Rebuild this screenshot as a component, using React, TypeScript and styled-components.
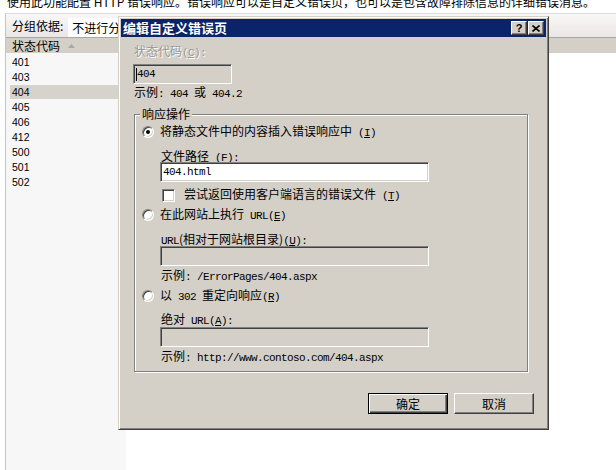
import styled, { createGlobalStyle } from "styled-components";

const codes = ["401", "403", "404", "405", "406", "412", "500", "501", "502"];

const GlobalStyle = createGlobalStyle`
  html, body {
    margin: 0;
    padding: 0;
    background: #fff;
  }
  body {
    font-family: "Noto Sans CJK SC", "Liberation Sans", sans-serif;
    font-size: 12px;
    color: #000;
  }
  #root {
    width: 616px;
    height: 470px;
    overflow: hidden;
  }
`;

const Page = styled.div`
  position: relative;
  width: 616px;
  height: 470px;
  overflow: hidden;
  display: flex;
  flex-direction: column;
`;

const Intro = styled.div`
  margin-top: -5px;
  padding-left: 7px;
  height: 13px;
  line-height: 13px;
  white-space: nowrap;
`;

const Panel = styled.div`
  flex: 1;
  margin: 5px 0 0 5px;
  border-left: 1px solid #c4c4c4;
  border-top: 1px solid #dcdcdc;
  display: flex;
  flex-direction: column;
`;

const Toolbar = styled.div`
  height: 23px;
  display: flex;
  align-items: stretch;
  padding-left: 6px;
  background: linear-gradient(to bottom, #f9f7f7, #ebe6e6);
  border-bottom: 1px solid #a8a8a8;
`;

const ToolLabel = styled.span`
  display: flex;
  align-items: center;
  line-height: 14px;
`;

const Combo = styled.div`
  margin: 4px 0 0 5px;
  padding-left: 4px;
  width: 60px;
  overflow: hidden;
  background: #fff;
  display: flex;
  align-items: center;
  white-space: nowrap;
`;

const Header = styled.div`
  height: 15px;
  background: #d4d0c8;
  display: flex;
  align-items: center;
  padding-left: 6px;
  line-height: 15px;
`;

const SortArrow = styled.svg`
  margin-left: 8px;
`;

const ListArea = styled.div`
  flex: 1;
  display: flex;
`;

const CodeColumn = styled.div`
  width: 116px;
  padding: 1px 0 0 4px;
  background: #f7f7f7;
`;

const CodeRow = styled.div<{ $selected?: boolean }>`
  height: 14px;
  margin: 1px 0;
  padding-left: 2px;
  line-height: 14px;
  font-family: "Liberation Sans", sans-serif;
  font-size: 10.5px;
  background: ${(p) => (p.$selected ? "#d6d3cd" : "transparent")};
`;

const Dialog = styled.div`
  position: absolute;
  left: 118px;
  top: 16px;
  width: 431px;
  height: 414px;
  box-sizing: border-box;
  background: #d4d0c8;
  border: 1px solid;
  border-color: #d4d0c8 #404040 #404040 #d4d0c8;
  box-shadow: inset 1px 1px 0 #fff, inset -1px -1px 0 #808080;
  padding: 2px;
  display: flex;
  flex-direction: column;
`;

const TitleBar = styled.div`
  height: 18px;
  flex-shrink: 0;
  background: #0a246a;
  display: flex;
  align-items: center;
  padding: 0 2px;
`;

const Title = styled.span`
  color: #fff;
  font-weight: bold;
  font-size: 13px;
  line-height: 16px;
`;

const CaptionButtons = styled.div`
  margin-left: auto;
  display: flex;
  gap: 1px;
`;

const CaptionButton = styled.div`
  width: 16px;
  height: 14px;
  box-sizing: border-box;
  background: #d4d0c8;
  border: 1px solid;
  border-color: #fff #404040 #404040 #fff;
  box-shadow: inset -1px -1px 0 #808080;
  display: flex;
  align-items: center;
  justify-content: center;
  font-family: "Liberation Sans", sans-serif;
  font-weight: bold;
  font-size: 11px;
  line-height: 12px;
`;

const Body = styled.div`
  flex: 1;
  padding: 7px 12px 0 12px;
  display: flex;
  flex-direction: column;
`;

const Label = styled.div<{ $mt?: number; $disabled?: boolean }>`
  height: 13px;
  line-height: 13px;
  margin-top: ${(p) => p.$mt ?? 0}px;
  padding-left: 1px;
  white-space: nowrap;
  color: ${(p) => (p.$disabled ? "#979797" : "#000")};
  text-shadow: ${(p) => (p.$disabled ? "1px 1px 0 #fff" : "none")};
`;

const Hint = styled.div<{ $mt?: number }>`
  height: 14px;
  line-height: 14px;
  margin-top: ${(p) => p.$mt ?? 0}px;
  padding-left: 1px;
  white-space: pre;
`;

const Mono = styled.span`
  font-family: "Liberation Mono", monospace;
  font-size: 11px;
  letter-spacing: -0.6px;
  white-space: pre;
`;

const TextBox = styled.div<{ $width: number; $mt?: number; $disabled?: boolean }>`
  width: ${(p) => p.$width}px;
  height: 20px;
  margin-top: ${(p) => p.$mt ?? 0}px;
  box-sizing: border-box;
  border: 1px solid;
  border-color: #808080 #fff #fff #808080;
  box-shadow: inset 1px 1px 0 #404040, inset -1px -1px 0 #d4d0c8;
  background: ${(p) => (p.$disabled ? "#d4d0c8" : "#fff")};
  padding-left: 2px;
  display: flex;
  align-items: center;
`;

const Caret = styled.span`
  width: 1px;
  height: 13px;
  background: #000;
`;

const GroupBox = styled.div`
  position: relative;
  margin: 15px 6px 0 1px;
  border: 1px solid #808080;
  box-shadow: 1px 1px 0 #fff, inset 1px 1px 0 #fff;
  padding: 10px 0 8px 7px;
  display: flex;
  flex-direction: column;
`;

const GroupTitle = styled.span`
  position: absolute;
  top: -8px;
  left: 5px;
  padding: 0 2px;
  line-height: 14px;
  background: #d4d0c8;
`;

const OptionRow = styled.div<{ $mt?: number }>`
  height: 14px;
  margin-top: ${(p) => p.$mt ?? 0}px;
  display: flex;
  align-items: center;
`;

const RowText = styled.span`
  line-height: 14px;
  white-space: pre;
`;

const Radio = styled.span<{ $checked?: boolean }>`
  position: relative;
  flex-shrink: 0;
  width: 12px;
  height: 12px;
  margin-right: 6px;
  box-sizing: border-box;
  border-radius: 50%;
  background: #fff;
  border: 1px solid;
  border-color: #808080 #fff #fff #808080;
  box-shadow: inset 1px 1px 0 #404040, inset -1px -1px 0 #d4d0c8;
  &::after {
    content: "";
    display: ${(p) => (p.$checked ? "block" : "none")};
    position: absolute;
    left: 3px;
    top: 3px;
    width: 4px;
    height: 4px;
    border-radius: 50%;
    background: #000;
  }
`;

const Indent = styled.div`
  margin-left: 18px;
  display: flex;
  flex-direction: column;
`;

const CheckRow = styled.div<{ $mt?: number }>`
  height: 14px;
  margin-top: ${(p) => p.$mt ?? 0}px;
  padding-left: 2px;
  display: flex;
  align-items: center;
`;

const CheckBox = styled.span`
  flex-shrink: 0;
  width: 13px;
  height: 13px;
  margin-right: 3px;
  box-sizing: border-box;
  background: #fff;
  border: 1px solid;
  border-color: #808080 #fff #fff #808080;
  box-shadow: inset 1px 1px 0 #404040, inset -1px -1px 0 #d4d0c8;
`;

const ButtonRow = styled.div`
  margin-top: 21px;
  display: flex;
  justify-content: flex-end;
  gap: 6px;
`;

const Button = styled.div<{ $default?: boolean }>`
  width: 80px;
  height: 21px;
  box-sizing: border-box;
  background: #d4d0c8;
  display: flex;
  align-items: center;
  justify-content: center;
  line-height: 14px;
  border: 1px solid;
  border-color: ${(p) => (p.$default ? "#000" : "#fff #404040 #404040 #fff")};
  box-shadow: ${(p) =>
    p.$default
      ? "inset 1px 1px 0 #fff, inset -1px -1px 0 #404040, inset -2px -2px 0 #808080"
      : "inset -1px -1px 0 #808080"};
`;

const Key = ({ k }: { k: string }) => (
  <Mono>
    (<u>{k}</u>)
  </Mono>
);

export default function App() {
  return (
    <>
      <GlobalStyle />
      <Page>
        <Intro>
          使用此功能配置 HTTP 错误响应。错误响应可以是自定义错误页，也可以是包含故障排除信息的详细错误消息。
        </Intro>
        <Panel>
          <Toolbar>
            <ToolLabel>分组依据:</ToolLabel>
            <Combo>不进行分组</Combo>
          </Toolbar>
          <Header>
            状态代码
            <SortArrow width="7" height="4" viewBox="0 0 7 4">
              <path d="M3.5 0 L7 4 L0 4 Z" fill="#a7a7a7" />
            </SortArrow>
          </Header>
          <ListArea>
            <CodeColumn>
              {codes.map((c) => (
                <CodeRow key={c} $selected={c === "404"}>
                  {c}
                </CodeRow>
              ))}
            </CodeColumn>
          </ListArea>
        </Panel>

        <Dialog>
          <TitleBar>
            <Title>编辑自定义错误页</Title>
            <CaptionButtons>
              <CaptionButton>?</CaptionButton>
              <CaptionButton>
                <svg width="8" height="7" viewBox="0 0 8 7">
                  <path d="M0.5 0.5 L7.5 6.5 M7.5 0.5 L0.5 6.5" stroke="#000" strokeWidth="1.6" />
                </svg>
              </CaptionButton>
            </CaptionButtons>
          </TitleBar>
          <Body>
            <Label $disabled>
              状态代码<Key k="C" />
              <Mono>:</Mono>
            </Label>
            <TextBox $width={99} $mt={7} $disabled>
              <Caret />
              <Mono>404</Mono>
            </TextBox>
            <Hint $mt={1}>
              示例<Mono>: 404 </Mono>或<Mono> 404.2</Mono>
            </Hint>

            <GroupBox>
              <GroupTitle>响应操作</GroupTitle>
              <OptionRow>
                <Radio $checked />
                <RowText>
                  将静态文件中的内容插入错误响应中<Mono> </Mono>
                  <Key k="I" />
                </RowText>
              </OptionRow>
              <Indent>
                <Label $mt={10}>
                  文件路径<Mono> </Mono>
                  <Key k="F" />
                  <Mono>:</Mono>
                </Label>
                <TextBox $width={269}>
                  <Mono>404.html</Mono>
                </TextBox>
                <CheckRow $mt={6}>
                  <CheckBox />
                  <RowText>
                    <Mono> </Mono>尝试返回使用客户端语言的错误文件<Mono> </Mono>
                    <Key k="T" />
                  </RowText>
                </CheckRow>
              </Indent>

              <OptionRow $mt={6}>
                <Radio />
                <RowText>
                  在此网站上执行<Mono> URL</Mono>
                  <Key k="E" />
                </RowText>
              </OptionRow>
              <Indent>
                <Label $mt={10}>
                  <Mono>URL</Mono>(相对于网站根目录)<Key k="U" />
                  <Mono>:</Mono>
                </Label>
                <TextBox $width={269} $mt={1} $disabled />
                <Hint $mt={2}>
                  示例<Mono>: /ErrorPages/404.aspx</Mono>
                </Hint>
              </Indent>

              <OptionRow $mt={7}>
                <Radio />
                <RowText>
                  以<Mono> 302 </Mono>重定向响应<Key k="R" />
                </RowText>
              </OptionRow>
              <Indent>
                <Label $mt={9}>
                  绝对<Mono> URL</Mono>
                  <Key k="A" />
                  <Mono>:</Mono>
                </Label>
                <TextBox $width={269} $mt={2} $disabled />
                <Hint $mt={2}>
                  示例<Mono>: http://www.contoso.com/404.aspx</Mono>
                </Hint>
              </Indent>
            </GroupBox>

            <ButtonRow>
              <Button $default>确定</Button>
              <Button>取消</Button>
            </ButtonRow>
          </Body>
        </Dialog>
      </Page>
    </>
  );
}
